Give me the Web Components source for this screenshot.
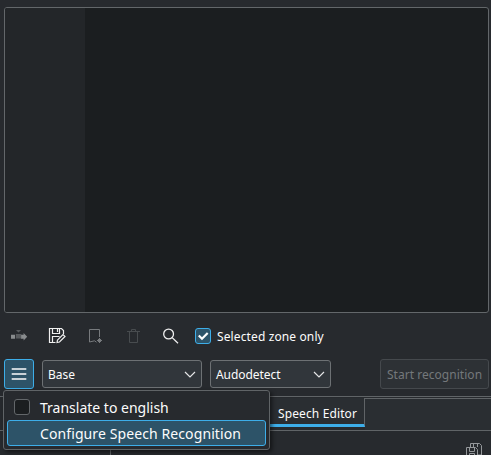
<!DOCTYPE html>
<html lang="en"><head><meta charset="utf-8"><title>Speech Editor</title>
<style>
html,body{margin:0;width:491px;height:455px;overflow:hidden;background:#272a2e}
body{font:12px/16px "Noto Sans","Open Sans",sans-serif;color:#fcfcfc}
</style></head><body>
<speech-panel></speech-panel>
<script>
function define(name, html){
  const t=document.createElement('template'); t.innerHTML=html;
  customElements.define(name,class extends HTMLElement{
    constructor(){super();this.attachShadow({mode:'open'}).append(t.content.cloneNode(true));}
  });
}
define('text-view',`<style>:host{display:flex;box-sizing:border-box;width:485px;height:306px;border:1px solid #63676a;border-radius:3px;background:#1b1e20;overflow:hidden}.gutter{width:80px;background:#232629}</style><div class="gutter"></div>`);
define('check-box',`<style>:host{display:flex;align-items:center;gap:var(--gap,6px)}.box{box-sizing:border-box;width:16px;height:16px;border:1px solid #63676a;border-radius:3px;background:#1b1e20}svg{display:none}:host([checked]) .box{border-color:#3daee9;background:#2d5368}:host([checked]) svg{display:block}.label{padding-top:var(--drop,1px)}</style><span class="box"><svg width="14" height="14" fill="none" stroke="#fcfcfc" stroke-width="2.2"><path d="M2.8 6.5L6 9.7L11.7 4"/></svg></span><span class="label"><slot></slot></span>`);
define('combo-box',`<style>:host{display:flex;box-sizing:border-box;height:28px;border:1px solid #6d7174;border-radius:3px;background:#31363b;align-items:center;justify-content:space-between;padding:0 5px}span{padding-top:2px}</style><span><slot></slot></span><svg width="12" height="8" fill="none" stroke="#e5e6e7" stroke-width="1.2"><path d="M1 2L6 7L11 2"/></svg>`);
define('menu-button',`<style>:host{display:grid;place-items:center;box-sizing:border-box;width:30px;height:30px;border:1px solid #3daee9;border-radius:3px;background:#2d5368}</style><svg width="16" height="14" stroke="#fcfcfc" stroke-width="1.6"><path d="M.7 2H15.3M.7 7H15.3M.7 12H15.3"/></svg>`);
define('push-button',`<style>:host{display:grid;place-items:center;box-sizing:border-box;width:109px;height:30px;border:1px solid #45494d;border-radius:3px;background:#2d3135;color:#74787b;white-space:nowrap}span{padding-top:1px}</style><span><slot></slot></span>`);
define('tool-bar',`<style>:host{display:flex;height:22px;align-items:center}svg{width:22px;height:22px;margin-right:16px;flex:none}check-box{margin-left:-3px;letter-spacing:.12px}</style>
<svg viewBox="0 0 22 22"><path d="M3 9.8h4v4H3zM13 9.8h2.6V8l3.6 3.8-3.6 3.8v-1.8h-2.6z" fill="#898c8e"/><path d="M7.8 9h5.4v4.6H7.8zM8 5h5l-2.5 2.5z" fill="#585b5e"/></svg>
<svg viewBox="0 0 22 22" fill="none" stroke="#f0f0f0" stroke-width="1.2"><path d="M9.5 17.5H3.5V3.5H15.5L17.5 5.5V9M6.5 3.5V8.5H13.5V3.5M6.5 17V11.5H13.5M11.5 4V7M11 17.5l.5-2.5 5.5-5.5 2 2-5.5 5.5z"/></svg>
<svg viewBox="-1 0 22 22" fill="none" stroke="#777a7d"><path d="M11.5 17.2l-2-1.4-5 1.2V4.5H14.5V12M14.5 13v5M12 15.5h5M13 14l3 3M16 14l-3 3"/></svg>
<svg viewBox="-1 0 22 22" fill="none" stroke="#484c4f"><path d="M4 6.5H17M8.5 6V4.5H12.5V6M6.5 7V17.5H14.5V7"/></svg>
<svg viewBox="0 0 22 22" fill="none" stroke="#f0f0f0" stroke-width="1.3"><circle cx="8.6" cy="9" r="4.9"/><path d="M12.2 12.6L18 18.2"/></svg>
<check-box checked><slot></slot></check-box>`);
define('control-row',`<style>:host{display:flex;align-items:center;gap:8px;height:30px}.base{width:160px;margin-top:-1px}.detect{width:121px;margin-top:-1px;letter-spacing:-.05px}push-button{margin-left:auto;letter-spacing:.04px}</style><menu-button></menu-button><combo-box class="base">Base</combo-box><combo-box class="detect">Audodetect</combo-box><push-button>Start recognition</push-button>`);
define('tab-strip',`<style>:host{display:grid;grid-template-columns:364px 1fr;box-sizing:border-box;height:35px;border-top:1px solid #606467;border-bottom:1px solid #606467}.tab{box-sizing:border-box;height:29px;margin:1px 0 0 200px;border-right:1px solid #606467;border-bottom:3px solid #3daee9;background:#2a2e32;padding:8px 0 0 78px;width:165px;letter-spacing:.12px}.rest{height:32px;margin:1px 0 0 1px;box-sizing:border-box;border-top:1px solid #606467;background:#2a2e32}</style><div class="tab"><slot></slot></div><div class="rest"></div>`);
define('editor-pane',`<style>:host{display:flex;height:24px;justify-content:space-between}.split{width:110px;border-right:1px solid #606467}svg{margin:12px 9px 0 0}</style><div class="split"></div><svg width="16" height="12" fill="none" stroke="#94979a"><path d="M4.5 4V.5H13.5L15.5 2.5V12H12M7.5 1V4M11.5 1V4M.5 12V4.5H9.5L11.5 6.5V12M3.5 5V8.5H8.5V5M3.5 12V10.5H8.5V12"/></svg>`);
define('menu-item',`<style>:host{display:flex;box-sizing:border-box;height:26px;align-items:center;border:1px solid transparent;border-radius:3px;padding-left:var(--inset,32px);font-size:14px;line-height:20px;white-space:nowrap}:host([selected]){background:#2d5368;border-color:#3daee9}.text{padding-top:var(--text-drop,2px)}</style><span class="text"><slot></slot></span>`);
define('popup-menu',`<style>:host{display:block;box-sizing:border-box;width:267px;height:60px;border:1px solid #606467;border-radius:3px;background:#272a2e;padding:3px;box-shadow:2px 2px 4px #0008}.check{--inset:6px;--text-drop:0}check-box{--gap:10px;--drop:2px}.config{letter-spacing:.1px}</style><menu-item class="check"><check-box>Translate to english</check-box></menu-item><menu-item class="config" selected>Configure Speech Recognition</menu-item>`);
define('speech-panel',`<style>:host{display:block;position:relative;width:491px;height:455px;overflow:hidden}
text-view{margin:7px 0 0 4px}tool-bar{margin:12px 0 0 8px}control-row{margin:12px 2px 0 4px}tab-strip{margin-top:7px}popup-menu{position:absolute;left:3px;top:390px}</style><text-view></text-view><tool-bar>Selected zone only</tool-bar><control-row></control-row><tab-strip>Speech Editor</tab-strip><editor-pane></editor-pane><popup-menu></popup-menu>`);
</script></body></html>
